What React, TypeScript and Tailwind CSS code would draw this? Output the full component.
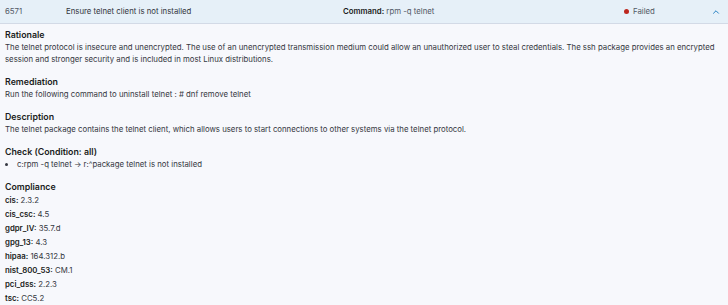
import { ChevronUp } from "lucide-react";

const compliance = [
  { key: "cis", value: "2.3.2" },
  { key: "cis_csc", value: "4.5" },
  { key: "gdpr_IV", value: "35.7.d" },
  { key: "gpg_13", value: "4.3" },
  { key: "hipaa", value: "164.312.b" },
  { key: "nist_800_53", value: "CM.1" },
  { key: "pci_dss", value: "2.2.3" },
  { key: "tsc", value: "CC5.2" },
];

const Section = ({ title, children }: { title: string; children: React.ReactNode }) => (
  <div className="mb-[10px]">
    <h3 className="text-[8.8px] leading-[13px] font-semibold text-[#1a1c21]">{title}</h3>
    {children}
  </div>
);

export default function App() {
  return (
    <div
      className="w-[728px] h-[305px] overflow-hidden bg-[#f7f8fc] text-[#343741]"
      style={{ fontFamily: "Inter, 'Noto Sans', sans-serif" }}
    >
      <div className="flex items-center h-[24px] bg-[#e6f0f8] text-[7.8px] border-b border-[#d3dae6]">
        <div className="w-[66px] pl-[5px] text-[#535966]">6571</div>
        <div className="w-[277px] text-[#343741]">Ensure telnet client is not installed</div>
        <div className="w-[276px] text-[#535966]">
          <span className="font-semibold text-[#1a1c21]">Command:</span> rpm -q telnet
        </div>
        <div className="flex items-center gap-[4px] w-[92px] pl-[5px] text-[#535966]">
          <span className="w-[5px] h-[5px] rounded-full bg-[#bd271e]" />
          Failed
        </div>
        <ChevronUp className="w-[10px] h-[10px] text-[#006bb8]" strokeWidth={2} />
      </div>

      <div className="px-[5px] pt-[4px] text-[7.8px] leading-[12px]">
        <Section title="Rationale">
          <p>
            The telnet protocol is insecure and unencrypted. The use of an unencrypted transmission medium could allow an
            unauthorized user to steal credentials. The ssh package provides an encrypted session and stronger security and
            is included in most Linux distributions.
          </p>
        </Section>
        <Section title="Remediation">
          <p>Run the following command to uninstall telnet : # dnf remove telnet</p>
        </Section>
        <Section title="Description">
          <p>
            The telnet package contains the telnet client, which allows users to start connections to other systems via the
            telnet protocol.
          </p>
        </Section>
        <Section title="Check (Condition: all)">
          <ul className="list-disc pl-[12px]">
            <li>c:rpm -q telnet → r:^package telnet is not installed</li>
          </ul>
        </Section>
        <div>
          <h3 className="text-[8.8px] leading-[13px] font-semibold text-[#1a1c21]">Compliance</h3>
          {compliance.map((c) => (
            <div key={c.key} className="leading-[14px]">
              <span className="font-semibold text-[#1a1c21]">{c.key}:</span> {c.value}
            </div>
          ))}
        </div>
      </div>
    </div>
  );
}
